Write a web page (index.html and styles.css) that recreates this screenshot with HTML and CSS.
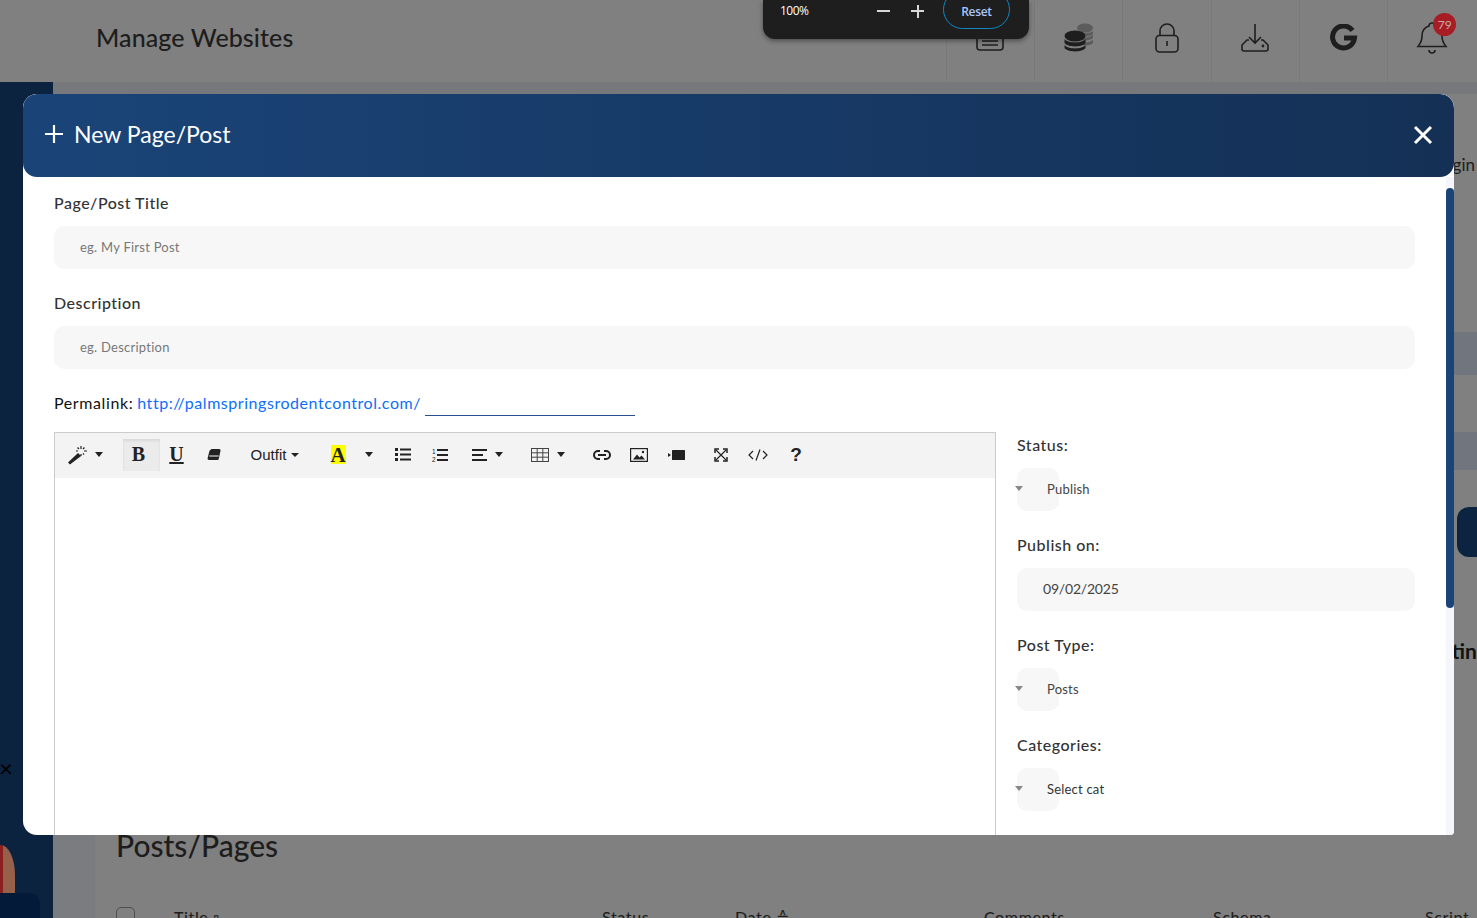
FILE: index.html
```html
<!DOCTYPE html>
<html lang="en">
<head>
    <meta charset="UTF-8">
    <title>Manage Websites</title>
    <link rel="stylesheet" href="styles.css">
</head>
<body>
    <!-- dimmed page behind the modal -->
    <div class="page">
        <header class="topbar">
            <h1 class="page-title">Manage Websites</h1>
            <div class="top-icons">
                <div class="top-cell news-cell">
                    <svg width="30" height="24" viewBox="0 0 30 24" fill="none" stroke="#1e1e1e" stroke-width="1.6"><rect x="2" y="3" width="26" height="19" rx="3"/><path d="M7 9h16M7 13h16M7 17h16"/></svg>
                </div>
                <div class="top-cell">
                    <svg width="32" height="30" viewBox="0 0 32 30">
                        <g fill="#5c5c5c"><ellipse cx="22" cy="5" rx="8" ry="4.5"/><path d="M14 8c3 3 13 3 16 0v3c-2 3-12 3-16 1zM18 14c5 1 9 0 12-2v3c-2 2-7 3-12 2zM18 19c5 1 9 0 12-2v3c-2 2-7 3-12 2z"/></g>
                        <g fill="#1e1e1e"><ellipse cx="12" cy="13" rx="10.5" ry="5.5"/><path d="M1.500 16c3 4.500 18 4.500 21 0v4c-3 4.500-18 4.500-21 0zM1.500 22c3 4.500 18 4.500 21 0v3c-3 4.500-18 4.500-21 0z"/></g>
                    </svg>
                </div>
                <div class="top-cell">
                    <svg width="26" height="30" viewBox="0 0 26 30" fill="none" stroke="#1e1e1e" stroke-width="1.6"><path d="M6 13V8a7 7 0 0 1 14 0v5"/><rect x="2" y="12.500" width="22" height="16.500" rx="3.500"/><path d="M13 18v5"/></svg>
                </div>
                <div class="top-cell">
                    <svg width="30" height="30" viewBox="0 0 30 30" fill="none" stroke="#1e1e1e" stroke-width="1.6"><path d="M15 1v19M9 14l6 6 6-6"/><path d="M9 17H7l-5 5v4a2 2 0 0 0 2 2h22a2 2 0 0 0 2-2v-4l-5-5h-2"/><circle cx="23" cy="23" r=".6"/></svg>
                </div>
                <div class="top-cell">
                    <svg width="28" height="28" viewBox="0 0 28 28" fill="none" stroke="#1e1e1e" stroke-width="5"><path d="M22.500 6.500A11 11 0 1 0 24.500 14H14"/></svg>
                </div>
                <div class="top-cell bell-cell">
                    <svg width="32" height="36" viewBox="0 0 32 36" fill="none" stroke="#1e1e1e" stroke-width="1.6"><path d="M16 3a3 3 0 0 1 3 3c5 1.500 7 5 7 10 0 5 2 8 4 10.500H2C4 24 6 21 6 16c0-5 2-8.500 7-10a3 3 0 0 1 3-3z"/><path d="M13 30a3 3 0 0 0 6 0"/></svg>
                    <span class="badge">79</span>
                </div>
            </div>
        </header>
        <div class="page-body">
            <aside class="sidebar">
                <span class="side-close">×</span>
                <div class="side-photo"></div>
                <div class="side-box"></div>
            </aside>
            <div class="gutter"></div>
            <main class="main">
                <div class="upper">
                    <div class="rail">
                        <div class="rail-strip strip-top"></div>
                        <div class="rail-text">Login</div>
                        <div class="rail-space s1"></div>
                        <div class="rail-strip strip-a"></div>
                        <div class="rail-space s2"></div>
                        <div class="rail-strip strip-b"></div>
                        <div class="rail-space s3"></div>
                        <div class="rail-btn"></div>
                        <div class="rail-space s4"></div>
                        <div class="rail-title">Setting</div>
                    </div>
                </div>
                <h2 class="posts-title">Posts/Pages</h2>
                <div class="posts-head">
                    <span class="check"></span>
                    <span>Title ▫</span>
                    <span>Status</span>
                    <span>Date ≙</span>
                    <span>Comments</span>
                    <span>Schema</span>
                    <span>Script</span>
                </div>
            </main>
        </div>
    </div>

    <!-- zoom popup -->
    <div class="zoom-pop">
        <span class="zoom-val">100%</span>
        <span class="zoom-btn minus"></span>
        <span class="zoom-btn plus"></span>
        <span class="zoom-reset">Reset</span>
    </div>

    <!-- modal -->
    <div class="modal">
        <div class="modal-head">
            <div class="modal-title">
                <svg width="20" height="20" viewBox="0 0 20 20" stroke="#fff" stroke-width="2.200"><path d="M10 1v18M1 10h18"/></svg>
                <span>New Page/Post</span>
            </div>
            <svg class="modal-close" width="20" height="20" viewBox="0 0 20 20" stroke="#fff" stroke-width="3"><path d="M2 2l16 16M18 2L2 18"/></svg>
        </div>
        <div class="modal-body">
            <div class="form">
                <label class="field-label">Page/Post Title</label>
                <input class="field" type="text" placeholder="eg. My First Post">
                <label class="field-label">Description</label>
                <input class="field" type="text" placeholder="eg. Description">
                <div class="permalink">
                    <span>Permalink:</span>
                    <a class="perma-url" href="#">http://palmspringsrodentcontrol.com/</a>
                    <span class="perma-slug"></span>
                </div>
                <div class="columns">
                    <div class="editor">
                        <div class="toolbar">
                            <div class="tb-group g13">
                                <span class="tb w50 gap6">
                                    <svg width="20" height="20" viewBox="0 0 20 20"><path d="M2 18.500l-1-1 9-8.500 2 2z" fill="#222" stroke="#222" stroke-width="1.500"/><path d="M13 1v3M13 9v2M8 6h2M16 6h3M9.500 2.500l1.500 1.500M16.500 2.500L15 4M16 9.500L15 8.500" stroke="#222" stroke-width="1.200" fill="none"/></svg>
                                    <i class="caret"></i>
                                </span>
                            </div>
                            <div class="tb-group g7">
                                <span class="tb w37 active tb-serif">B</span>
                                <span class="tb w35 tb-serif under">U</span>
                                <span class="tb w38">
                                    <svg width="14" height="13" viewBox="0 0 14 13"><path d="M4.500 1h7.500a1.500 1.500 0 0 1 1.500 1.800l-1.700 8A1.500 1.500 0 0 1 10.300 12H2a1.500 1.500 0 0 1-1.400-1.800l1.900-7.500z" fill="#222"/><path d="M2.200 8h9.500" stroke="#f3f3f3" stroke-width="1"/></svg>
                                </span>
                            </div>
                            <div class="tb-group g14">
                                <span class="tb w69 tb-font">Outfit <i class="caret small"></i></span>
                            </div>
                            <div class="tb-group g0">
                                <span class="tb w30"><span class="hilite">A</span></span>
                                <span class="tb w32"><i class="caret"></i></span>
                                <span class="tb w36">
                                    <svg width="16" height="13" viewBox="0 0 16 13" fill="#222"><rect y="0" width="3" height="3"/><rect y="5" width="3" height="3"/><rect y="10" width="3" height="3"/><rect x="5" y="0.500" width="11" height="2"/><rect x="5" y="5.500" width="11" height="2"/><rect x="5" y="10.500" width="11" height="2"/></svg>
                                </span>
                                <span class="tb w38">
                                    <svg width="16" height="14" viewBox="0 0 16 14" fill="#222"><text x="0" y="6" font-size="6.500" font-family="Liberation Sans">1</text><text x="0" y="13.500" font-size="6.500" font-family="Liberation Sans">2</text><rect x="5" y="1" width="11" height="2"/><rect x="5" y="6" width="11" height="2"/><rect x="5" y="11" width="11" height="2"/></svg>
                                </span>
                                <span class="tb w56">
                                    <svg width="15" height="12" viewBox="0 0 15 12" fill="#222"><rect width="15" height="2"/><rect y="5" width="11" height="2"/><rect y="10" width="15" height="2"/></svg>
                                    <i class="caret"></i>
                                </span>
                            </div>
                            <div class="tb-group g8 left5">
                                <span class="tb w55">
                                    <svg width="18" height="14" viewBox="0 0 18 14" fill="none" stroke="#444" stroke-width="1"><rect x=".5" y=".5" width="17" height="13"/><path d="M.5 4.800h17M.5 9.200h17M6.200.5v13M11.800.5v13"/></svg>
                                    <i class="caret"></i>
                                </span>
                            </div>
                            <div class="tb-group g7">
                                <span class="tb w37">
                                    <svg width="18" height="10" viewBox="0 0 18 10" fill="none" stroke="#222" stroke-width="2"><path d="M7 1H5a4 4 0 0 0 0 8h2M11 1h2a4 4 0 0 1 0 8h-2M5 5h8"/></svg>
                                </span>
                                <span class="tb w38">
                                    <svg width="18" height="14" viewBox="0 0 18 14"><rect x=".6" y=".6" width="16.800" height="12.800" fill="none" stroke="#222" stroke-width="1.200"/><path d="M3 11.500l4-5 2.500 3 2-2 3.500 4z" fill="#222"/><circle cx="13" cy="4" r="1.200" fill="#222"/></svg>
                                </span>
                                <span class="tb w37">
                                    <svg width="17" height="10" viewBox="0 0 17 10" fill="#222"><path d="M0 3l3 2-3 2z"/><rect x="4" y="0" width="13" height="10" rx=".5"/></svg>
                                </span>
                            </div>
                            <div class="tb-group g0">
                                <span class="tb w37">
                                    <svg width="14" height="14" viewBox="0 0 14 14" fill="none" stroke="#222" stroke-width="1.200"><path d="M2 2l10 10M12 2L2 12"/><path d="M1 5V1h4M9 1h4v4M13 9v4H9M5 13H1V9" stroke-width="1.500"/></svg>
                                </span>
                                <span class="tb w38">
                                    <svg width="22" height="12" viewBox="0 0 22 12" fill="none" stroke="#222" stroke-width="1.200"><path d="M6 2L2 6l4 4M16 2l4 4-4 4M13 .5L9 11.500"/></svg>
                                </span>
                                <span class="tb w38 tb-help">?</span>
                            </div>
                        </div>
                        <div class="editor-area"></div>
                    </div>
                    <div class="side-form">
                        <div class="side-field">
                            <label class="field-label">Status:</label>
                            <div class="pick"><i class="pick-arrow"></i><span>Publish</span></div>
                        </div>
                        <div class="side-field">
                            <label class="field-label">Publish on:</label>
                            <div class="date-box">09/02/2025</div>
                        </div>
                        <div class="side-field">
                            <label class="field-label">Post Type:</label>
                            <div class="pick"><i class="pick-arrow"></i><span>Posts</span></div>
                        </div>
                        <div class="side-field">
                            <label class="field-label">Categories:</label>
                            <div class="pick"><i class="pick-arrow"></i><span class="dark">Select cat</span></div>
                        </div>
                    </div>
                </div>
            </div>
            <div class="scroll-track"><div class="scroll-thumb"></div></div>
        </div>
    </div>
</body>
</html>
```

FILE: styles.css
```css
* {
    box-sizing: border-box;
}
html, body {
    height: 100%;
}
body {
    margin: 0;
    overflow: hidden;
    background-color: #808080;
    font-family: "Lato", "Liberation Sans", sans-serif;
    color: #1d1d1d;
}
.page {
    height: 918px;
    display: flex;
    flex-direction: column;
    overflow: hidden;
}
.topbar {
    height: 82px;
    flex: none;
    display: flex;
    justify-content: space-between;
    background-color: #808080;
}
.page-title {
    margin: 0;
    padding: 19px 0 0 96px;
    font-size: 25px;
    line-height: 36px;
    font-weight: 500;
    letter-spacing: 0.1px;
}
.top-icons {
    display: flex;
    padding-right: 1.500px;
}
.top-cell {
    width: 88.300px;
    display: flex;
    align-items: center;
    justify-content: center;
    padding-bottom: 6px;
    border-left: 1px solid #797979;
}
.news-cell {
    padding-bottom: 2px;
}
.bell-cell {
    position: relative;
}
.badge {
    position: absolute;
    top: 13px;
    left: 45px;
    width: 23px;
    height: 23px;
    border-radius: 50%;
    background-color: #a71d23;
    color: #c9a9a9;
    font-size: 12px;
    line-height: 23px;
    text-align: center;
}
.page-body {
    flex: 1;
    display: flex;
    min-height: 0;
}
.sidebar {
    width: 53px;
    flex: none;
    position: relative;
    background-color: #0c2340;
}
.side-close {
    position: absolute;
    top: 674px;
    left: -1px;
    font-size: 24px;
    line-height: 24px;
    color: #000;
}
.side-photo {
    position: absolute;
    top: 763px;
    left: -14px;
    width: 29px;
    height: 60px;
    border-radius: 50% 50% 0 0;
    background: linear-gradient(90deg, #8c1f1f 58%, #96604a 58%);
}
.side-box {
    position: absolute;
    top: 811px;
    left: -10px;
    width: 50px;
    height: 40px;
    border-radius: 10px;
    background-color: #031a38;
}
.gutter {
    width: 42px;
    flex: none;
    background-color: #7b7c7f;
    border-top: 12px solid #76787c;
}
.main {
    flex: 1;
    min-width: 0;
    padding-left: 21px;
    background: linear-gradient(#76787c 12px, #808080 12px);
}
.upper {
    height: 745px;
    display: flex;
    justify-content: flex-end;
}
.rail {
    width: 60px;
    display: flex;
    flex-direction: column;
}
.rail-strip {
    background-color: #71757d;
}
.strip-top {
    height: 68px;
    background-color: transparent;
}
.strip-a {
    height: 43px;
}
.strip-b {
    height: 38px;
}
.s1 {
    height: 152px;
}
.s2 {
    height: 57px;
}
.s3 {
    height: 37px;
}
.s4 {
    height: 79px;
}
.rail-text {
    height: 30px;
    font-size: 17px;
    line-height: 30px;
    text-align: right;
    padding-right: 2px;
}
.rail-btn {
    height: 50px;
    margin-left: 40px;
    width: 40px;
    border-radius: 12px 0 0 12px;
    background-color: #0d2440;
}
.rail-title {
    height: 30px;
    margin-right: -11px;
    font-size: 21px;
    font-weight: 700;
    line-height: 30px;
    text-align: right;
    color: #111;
}
.posts-title {
    margin: 0;
    height: 40px;
    font-size: 30px;
    font-weight: 500;
    line-height: 36px;
}
.posts-head {
    margin-top: 40px;
    display: grid;
    grid-template-columns: 58px 428px 133px 249px 229px 212px 60px;
    font-size: 16px;
    font-weight: 500;
    line-height: 20px;
    letter-spacing: 0.6px;
}
.check {
    width: 19px;
    height: 19px;
    border: 1px solid #4e4e4e;
    border-radius: 5px;
}

/* zoom popup */
.zoom-pop {
    position: absolute;
    top: 0;
    left: 763px;
    width: 266px;
    height: 39px;
    display: flex;
    align-items: flex-start;
    background-color: #1e1e1e;
    border-radius: 0 0 12px 12px;
    box-shadow: 0 2px 5px rgba(0, 0, 0, 0.4);
    color: #fff;
    font-family: "Open Sans", "Liberation Sans", sans-serif;
}
.zoom-val {
    width: 107px;
    padding: 3px 0 0 17px;
    font-size: 12px;
    line-height: 16px;
    letter-spacing: -0.5px;
}
.zoom-btn {
    width: 34px;
    height: 22px;
    position: relative;
}
.zoom-btn::before,
.plus::after {
    content: "";
    position: absolute;
    top: 10px;
    left: 7px;
    width: 13px;
    height: 2px;
    background-color: #d8d8d8;
}
.plus::after {
    top: 5px;
    left: 13px;
    width: 2px;
    height: 13px;
}
.zoom-reset {
    width: 67px;
    height: 39px;
    margin: -10px 0 0 5px;
    padding-top: 13px;
    border: 1px solid #0f86c0;
    border-radius: 20px;
    color: #a8c7fa;
    font-size: 12px;
    font-weight: 600;
    line-height: 16px;
    text-align: center;
    letter-spacing: -0.3px;
}

/* modal */
.modal {
    position: absolute;
    top: 94px;
    left: 23px;
    width: 1431px;
    height: 741px;
    display: flex;
    flex-direction: column;
    background-color: #fff;
    border-radius: 14px 14px 4px 14px;
    overflow: hidden;
}
.modal-head {
    height: 83px;
    flex: none;
    display: flex;
    align-items: center;
    justify-content: space-between;
    padding: 0 21px 3px 21px;
    background: linear-gradient(90deg, #1a4478, #143055);
    border-radius: 14px;
}
.modal-title {
    display: flex;
    align-items: center;
    gap: 11px;
    color: #fff;
    font-size: 23px;
    letter-spacing: 0.02px;
}
.modal-title span {
    margin-left: -1px;
}
.modal-close {
    margin-top: 2px;
}
.modal-body {
    flex: 1;
    min-height: 0;
    display: flex;
}
.form {
    flex: 1;
    min-width: 0;
    padding: 16px 31px 0;
    overflow: hidden;
}
.scroll-track {
    width: 8px;
    flex: none;
    padding-top: 11px;
    background-color: #f5f6fb;
}
.scroll-thumb {
    height: 420px;
    border-radius: 4px;
    background-color: #1a4478;
}
.field-label {
    display: block;
    height: 20px;
    font-size: 16px;
    font-weight: 500;
    line-height: 20px;
    color: #333;
    letter-spacing: 0.5px;
}
.field {
    display: block;
    width: 100%;
    height: 43px;
    margin: 13px 0 24px;
    padding: 0 26px 2px;
    border: none;
    border-radius: 10px;
    background-color: #f7f7f7;
    font-family: inherit;
    font-size: 13px;
    letter-spacing: 0.25px;
}
.field::placeholder {
    color: #777;
    opacity: 1;
}
.permalink {
    display: flex;
    align-items: flex-end;
    gap: 4px;
    height: 20px;
    font-size: 16px;
    line-height: 20px;
    color: #111;
    letter-spacing: 0.6px;
}
.perma-url {
    color: #0d6efd;
    text-decoration: none;
    letter-spacing: 0.55px;
}
.perma-slug {
    width: 210px;
    height: 22px;
    margin-bottom: -3px;
    border-bottom: 1px solid #2a4f90;
}
.columns {
    display: flex;
    gap: 21px;
    margin-top: 19px;
}
.editor {
    width: 942px;
    flex: none;
    height: 420px;
    border: 1px solid #ccc;
}
.toolbar {
    height: 45px;
    display: flex;
    align-items: center;
    padding: 0 0 2px 5px;
    background-color: #f3f3f3;
}
.tb-group {
    display: flex;
}
.g0 {
    margin-right: 0;
}
.g7 {
    margin-right: 7px;
}
.g8 {
    margin-right: 8px;
}
.g13 {
    margin-right: 13px;
}
.g14 {
    margin-right: 14px;
}
.left5 {
    margin-left: 5px;
}
.tb {
    height: 32px;
    display: flex;
    align-items: center;
    justify-content: center;
    gap: 8px;
    color: #222;
}
.gap6 {
    gap: 7px;
}
.w30 { width: 30px; }
.w32 { width: 32px; }
.w35 { width: 35px; }
.w36 { width: 36px; }
.w37 { width: 37px; }
.w38 { width: 38px; }
.w50 { width: 50px; }
.w55 { width: 55px; }
.w56 { width: 56px; }
.w69 { width: 69px; }
.active {
    padding-right: 6px;
    background-color: #ebebeb;
    box-shadow: inset 0 2px 3px rgba(0, 0, 0, 0.08);
}
.tb-serif {
    font-family: "Liberation Serif", serif;
    font-size: 20px;
    font-weight: 700;
}
.under {
    padding-right: 2px;
    text-decoration: underline;
}
.tb-font {
    gap: 5px;
    padding-left: 1px;
    font-family: "Liberation Sans", sans-serif;
    font-size: 15px;
}
.hilite {
    width: 15px;
    height: 19px;
    background-color: #ff0;
    font-family: "Liberation Serif", serif;
    font-size: 21px;
    font-weight: 700;
    line-height: 21px;
    text-align: center;
}
.tb-help {
    font-family: "Liberation Sans", sans-serif;
    font-size: 19px;
    font-weight: 700;
}
.caret {
    width: 0;
    height: 0;
    border-left: 4px solid transparent;
    border-right: 4px solid transparent;
    border-top: 5px solid #222;
}
.caret.small {
    border-top-width: 4px;
}
.side-form {
    flex: 1;
    min-width: 0;
    padding-top: 3px;
}
.side-field {
    height: 100px;
}
.pick {
    width: 42px;
    height: 43px;
    margin-top: 13px;
    padding-bottom: 2px;
    display: flex;
    align-items: center;
    border-radius: 10px;
    background-color: #f7f7f7;
    font-size: 13px;
    white-space: nowrap;
    color: #444;
    letter-spacing: 0.2px;
}
.pick .dark {
    color: #333;
}
.pick-arrow {
    width: 0;
    height: 0;
    margin: 0 24px 0 -2px;
    border-left: 4px solid transparent;
    border-right: 4px solid transparent;
    border-top: 5px solid #888;
}
.date-box {
    height: 43px;
    margin-top: 13px;
    padding-left: 26px;
    border-radius: 10px;
    background-color: #f7f7f7;
    font-size: 14px;
    line-height: 41px;
    color: #444;
    letter-spacing: -0.2px;
}
```
